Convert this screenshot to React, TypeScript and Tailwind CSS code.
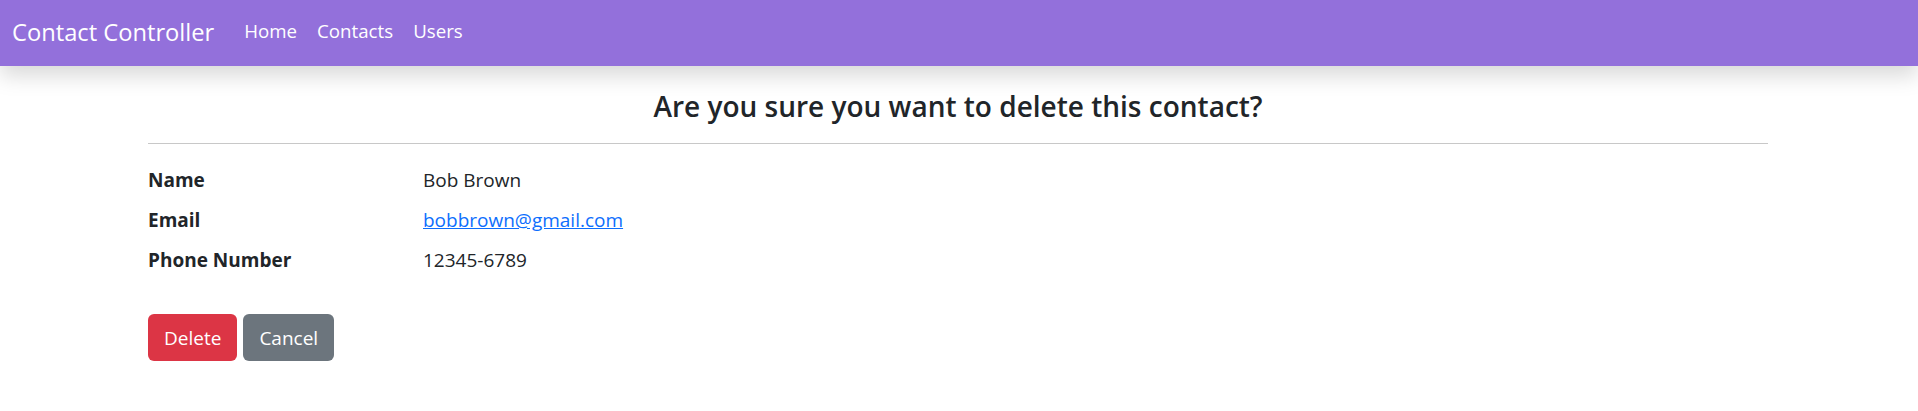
const navLinks = ["Home", "Contacts", "Users"];

const details = [
  { label: "Name", value: "Bob Brown" },
  { label: "Email", value: "bobbrown@gmail.com", link: true },
  { label: "Phone Number", value: "12345-6789" },
];

export default function App() {
  return (
    <div className="min-h-screen bg-white text-[#212529] font-['Open_Sans',sans-serif]">
      <nav className="relative z-10 flex h-[66px] items-center bg-[#9370db] px-3 shadow-[0_10px_20px_rgba(0,0,0,0.15)]">
        <a href="#" className="mr-5 text-[23.7px] leading-none text-white">
          Contact Controller
        </a>
        <ul className="flex pb-[3px]">
          {navLinks.map((l) => (
            <li key={l}>
              <a href="#" className="px-[10px] text-[18.7px] text-white">
                {l}
              </a>
            </li>
          ))}
        </ul>
      </nav>

      <main className="ml-[148px] w-[1620px]">
        <h4 className="mt-[22px] text-center text-[28px] font-semibold leading-[36px]">
          Are you sure you want to delete this contact?
        </h4>
        <hr className="mt-[19px] border-t border-[#c8c8c8]" />

        <dl className="mt-[21px] flex flex-col gap-[10px] text-[19px] leading-[30px]">
          {details.map((d) => (
            <div key={d.label} className="flex">
              <dt className="w-[275px] font-bold">{d.label}</dt>
              <dd>
                {d.link ? (
                  <a href="#" className="text-[#0d6efd] underline">
                    {d.value}
                  </a>
                ) : (
                  d.value
                )}
              </dd>
            </div>
          ))}
        </dl>

        <div className="mt-[39px] flex gap-[6px]">
          <button className="h-[47px] rounded-md bg-[#dc3545] px-4 pt-[2px] text-[19px] text-white">
            Delete
          </button>
          <button className="h-[47px] rounded-md bg-[#6c757d] px-4 pt-[2px] text-[19px] text-white">
            Cancel
          </button>
        </div>
      </main>
    </div>
  );
}
